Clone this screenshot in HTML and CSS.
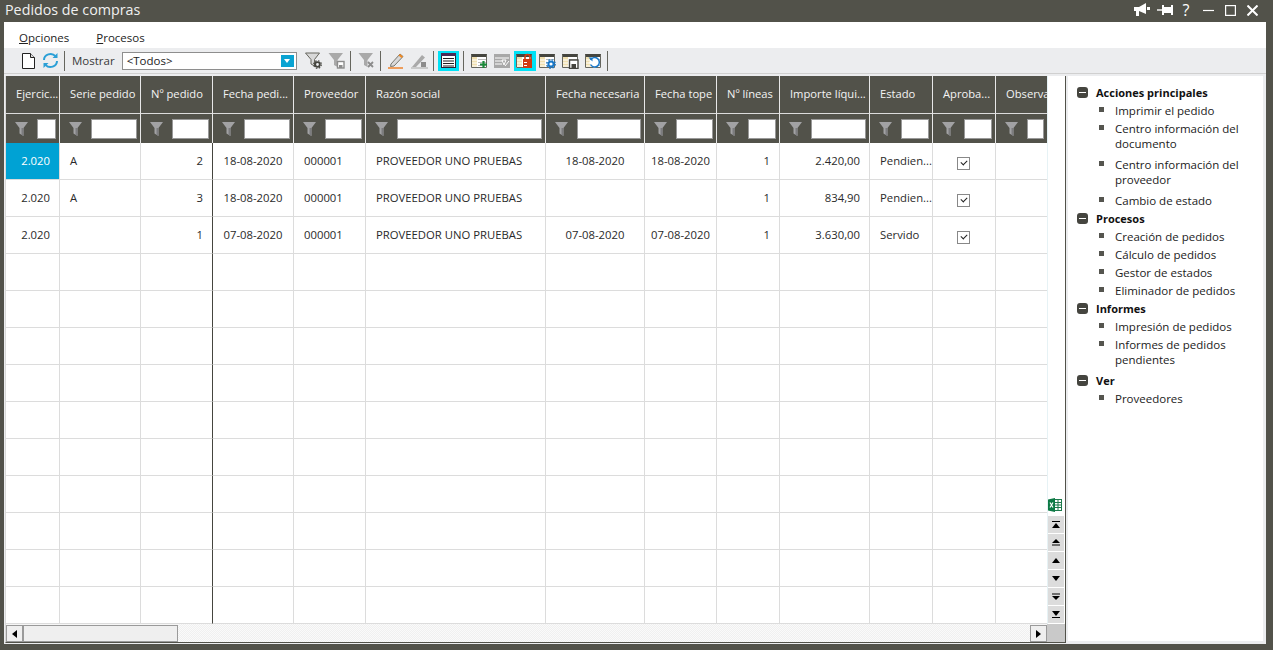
FILE: index.html
```html
<!DOCTYPE html>
<html lang="es">
<head>
    <meta charset="UTF-8">
    <title>Pedidos de compras</title>
    <link rel="stylesheet" href="styles.css">
</head>
<body>
    <svg class="defs" width="0" height="0">
        <symbol id="funnel" viewBox="0 0 13 14"><path d="M0 0H13L8.5 6V14L4.5 11.5V6Z" fill="#a2a2a4"/><path d="M8.5 6V14L6.5 12.7V6Z" fill="#7c7c7f"/></symbol>
        <symbol id="sheet" viewBox="0 0 16 16"><rect x="0" y="1" width="16" height="14" fill="#fff"/><rect x="0" y="1" width="16" height="3" fill="#45453f"/><rect x="1" y="4" width="5" height="10" fill="#f0dfae"/><path d="M1 7H15M1 10H15M1 13H15" stroke="#fff"/><path d="M7 6.500H15M7 9.500H15M7 12.500H15" stroke="#bbb"/><path d="M.5 1.500V14.500H15.500V1.500" fill="none" stroke="#66665e"/></symbol>
    </svg>
    <div class="window">
        <header class="titlebar">
            <span class="title">Pedidos de compras</span>
            <div class="wincontrols">
                <svg width="17" height="14" viewBox="0 0 17 14"><path d="M0 4H5L12 0V11L5 8V13H2V8H0Z" fill="#fff"/><rect x="13" y="4" width="3" height="3" fill="#fff"/></svg>
                <svg class="pin" width="17" height="12" viewBox="0 0 17 12"><path d="M0 6H5" stroke="#fff" stroke-width="1.400"/><path d="M5 1H7V3H14V1H16V11H14V9H7V11H5Z" fill="#fff"/></svg>
                <span class="help">?</span>
                <svg width="11" height="11" viewBox="0 0 11 11"><path d="M0 5.500H11" stroke="#fff" stroke-width="1.200"/></svg>
                <svg width="11" height="11" viewBox="0 0 11 11"><rect x=".6" y=".6" width="9.800" height="9.800" fill="none" stroke="#fff" stroke-width="1.200"/></svg>
                <svg width="11" height="11" viewBox="0 0 11 11"><path d="M.5 .5L10.500 10.500M10.500 .5L.5 10.500" stroke="#fff" stroke-width="2"/></svg>
            </div>
        </header>
        <div class="content">
            <nav class="menu">
                <span class="menu-item"><u>O</u>pciones</span>
                <span class="menu-item"><u>P</u>rocesos</span>
            </nav>
            <div class="toolbar">
                <button class="tool doc"><svg width="13" height="16" viewBox="0 0 13 16"><path d="M.5 .5H8.500L12.500 4.500V15.500H.5Z" fill="#fff" stroke="#222"/><path d="M8.500 .5V4.500H12.500" fill="#ddd" stroke="#222"/></svg></button>
                <button class="tool refresh"><svg width="17" height="17" viewBox="0 0 17 17" fill="none" stroke="#2a9fd6" stroke-width="2"><path d="M2 8A6.500 6 0 0 1 13.500 4.200"/><path d="M15 9A6.500 6 0 0 1 3.500 12.800"/><path d="M15.500 1V6H10.500Z M1.500 16V11H6.500Z" fill="#2a9fd6" stroke="none"/></svg></button>
                <i class="sep"></i>
                <label class="show-label">Mostrar</label>
                <div class="combo"><span>&lt;Todos&gt;</span><b class="combo-btn"></b></div>
                <button class="tool first"><svg width="17" height="17" viewBox="0 0 17 17"><path d="M.5 1H14.500L9.500 7.500V14L6 12V7.500Z" fill="#d8d8d8" stroke="#66665e"/><circle cx="12.500" cy="12.500" r="2.300" fill="none" stroke="#45453f" stroke-width="1.800"/><circle cx="12.500" cy="12.500" r="3.800" fill="none" stroke="#45453f" stroke-width="1.200" stroke-dasharray="1.500 1.500"/></svg></button>
                <button class="tool"><svg width="17" height="17" viewBox="0 0 17 17"><path d="M.5 1H15L9.500 8V15L6 13V8Z" fill="#a9a9a9"/><rect x="9.500" y="9.500" width="6.500" height="6.500" fill="#fff" stroke="#8c8c8c" stroke-width="1.400"/><rect x="11" y="13" width="3.500" height="3" fill="#8c8c8c"/></svg></button>
                <i class="sep"></i>
                <button class="tool"><svg width="17" height="17" viewBox="0 0 17 17"><path d="M.5 1H15L9.500 8V15L6 13V8Z" fill="#a9a9a9"/><path d="M10 10L15 15M15 10L10 15" stroke="#8c8c8c" stroke-width="1.800"/></svg></button>
                <i class="sep"></i>
                <button class="tool"><svg width="17" height="17" viewBox="0 0 17 17"><path d="M3 12L12 2L15 4.500L6 14L2.500 14.500Z" fill="#d9d9d9" stroke="#77776f"/><path d="M12 2L15 4.500L13.500 6L10.500 3.500Z" fill="#f08a24"/><path d="M0 16H15" stroke="#ee7a1e" stroke-width="1.400"/></svg></button>
                <button class="tool"><svg width="17" height="17" viewBox="0 0 17 17"><path d="M1 15L11 3L14 5.500L5 15Z" fill="#a9a9a9"/><path d="M0 16H17" stroke="#bbb" stroke-width="1.400"/><rect x="10" y="10" width="5" height="5" fill="#8c8c8c"/></svg></button>
                <i class="sep"></i>
                <button class="tool active"><svg width="15" height="15" viewBox="0 0 15 15"><rect x=".5" y=".5" width="14" height="14" fill="#fff" stroke="#2b2233"/><rect x="0" y="0" width="15" height="3" fill="#4a2a55"/><path d="M2 5.500H13M2 8H13M2 10.500H13M2 13H13" stroke="#222"/></svg></button>
                <i class="sep after-active"></i>
                <button class="tool"><svg width="17" height="16" viewBox="0 0 17 16"><use href="#sheet" width="16" height="16"/><path d="M12.500 8V15M9 11.500H16" stroke="#1c8a3a" stroke-width="2.200"/></svg></button>
                <button class="tool"><svg width="17" height="16" viewBox="0 0 17 16"><rect y="1" width="16" height="14" fill="#a8a8a8"/><path d="M1 5H15M1 8H8M1 11H8" stroke="#fff"/><path d="M8 7H12L10 12Z M11 13L15 8" stroke="#fff" fill="none"/></svg></button>
                <button class="tool active red"><svg width="17" height="16" viewBox="0 0 17 16"><use href="#sheet" width="16" height="16"/><rect x="7" y="6" width="9" height="9" fill="#cf3b12"/><path d="M9 6.500V4A2.500 2.500 0 0 1 14 4V6.500" fill="none" stroke="#cf3b12" stroke-width="1.600"/><rect x="8" y="9" width="3" height="1" fill="#fff"/><rect x="8" y="12" width="3" height="1" fill="#fff"/></svg></button>
                <button class="tool"><svg width="17" height="16" viewBox="0 0 17 16"><use href="#sheet" width="16" height="16"/><circle cx="12" cy="11" r="2.600" fill="#fff" stroke="#1677c9" stroke-width="2"/><circle cx="12" cy="11" r="4.300" fill="none" stroke="#1677c9" stroke-width="1.200" stroke-dasharray="1.700 1.700"/></svg></button>
                <button class="tool"><svg width="17" height="16" viewBox="0 0 17 16"><use href="#sheet" width="16" height="16"/><rect x="7.500" y="7" width="8.500" height="8.500" fill="#fff" stroke="#45453f" stroke-width="1.400"/><rect x="9.500" y="11" width="4.500" height="4" fill="#45453f"/></svg></button>
                <button class="tool"><svg width="17" height="16" viewBox="0 0 17 16"><use href="#sheet" width="16" height="16"/><circle cx="9.500" cy="9.500" r="5" fill="#fff"/><path d="M5.500 7A4.700 4.700 0 1 1 5.500 11.500" fill="none" stroke="#1677c9" stroke-width="1.500"/><path d="M3.500 4.500H7.500V8.500Z" fill="#1677c9"/></svg></button>
                <i class="sep"></i>
            </div>
            <div class="main">
                <section class="grid">
                    <div class="grid-top">
                        <div class="table-clip">
                            <table class="orders">
                                <colgroup>
                                    <col class="c54"><col class="c81"><col class="c72"><col class="c81"><col class="c72"><col class="c180"><col class="c99"><col class="c72"><col class="c63"><col class="c90"><col class="c63"><col class="c63"><col class="c63">
                                </colgroup>
                                <thead>
                                    <tr class="head">
                                        <th>Ejercic...</th><th>Serie pedido</th><th>Nº pedido</th><th>Fecha pedi...</th><th>Proveedor</th><th>Razón social</th><th>Fecha necesaria</th><th>Fecha tope</th><th>Nº líneas</th><th>Importe líqui...</th><th>Estado</th><th>Aproba...</th><th>Observa</th>
                                    </tr>
                                    <tr class="filters">
                                        <td><svg class="funnel"><use href="#funnel"/></svg><i class="fbox"></i></td>
                                        <td><svg class="funnel"><use href="#funnel"/></svg><i class="fbox"></i></td>
                                        <td><svg class="funnel"><use href="#funnel"/></svg><i class="fbox"></i></td>
                                        <td><svg class="funnel"><use href="#funnel"/></svg><i class="fbox"></i></td>
                                        <td><svg class="funnel"><use href="#funnel"/></svg><i class="fbox"></i></td>
                                        <td><svg class="funnel"><use href="#funnel"/></svg><i class="fbox"></i></td>
                                        <td><svg class="funnel"><use href="#funnel"/></svg><i class="fbox"></i></td>
                                        <td><svg class="funnel"><use href="#funnel"/></svg><i class="fbox"></i></td>
                                        <td><svg class="funnel"><use href="#funnel"/></svg><i class="fbox"></i></td>
                                        <td><svg class="funnel"><use href="#funnel"/></svg><i class="fbox"></i></td>
                                        <td><svg class="funnel"><use href="#funnel"/></svg><i class="fbox"></i></td>
                                        <td><svg class="funnel"><use href="#funnel"/></svg><i class="fbox"></i></td>
                                        <td><svg class="funnel"><use href="#funnel"/></svg><i class="fbox short"></i></td>
                                    </tr>
                                </thead>
                                <tbody>
                                    <tr><td class="num selected">2.020</td><td>A</td><td class="num">2</td><td class="mid">18-08-2020</td><td>000001</td><td>PROVEEDOR UNO PRUEBAS</td><td class="mid">18-08-2020</td><td class="mid">18-08-2020</td><td class="num">1</td><td class="num">2.420,00</td><td class="nowrap">Pendien...</td><td class="mid"><i class="check"></i></td><td></td></tr>
                                    <tr><td class="num">2.020</td><td>A</td><td class="num">3</td><td class="mid">18-08-2020</td><td>000001</td><td>PROVEEDOR UNO PRUEBAS</td><td></td><td></td><td class="num">1</td><td class="num">834,90</td><td class="nowrap">Pendien...</td><td class="mid"><i class="check"></i></td><td></td></tr>
                                    <tr><td class="num">2.020</td><td></td><td class="num">1</td><td class="mid">07-08-2020</td><td>000001</td><td>PROVEEDOR UNO PRUEBAS</td><td class="mid">07-08-2020</td><td class="mid">07-08-2020</td><td class="num">1</td><td class="num">3.630,00</td><td>Servido</td><td class="mid"><i class="check"></i></td><td></td></tr>
                                    <tr><td></td><td></td><td></td><td></td><td></td><td></td><td></td><td></td><td></td><td></td><td></td><td></td><td></td></tr>
                                    <tr><td></td><td></td><td></td><td></td><td></td><td></td><td></td><td></td><td></td><td></td><td></td><td></td><td></td></tr>
                                    <tr><td></td><td></td><td></td><td></td><td></td><td></td><td></td><td></td><td></td><td></td><td></td><td></td><td></td></tr>
                                    <tr><td></td><td></td><td></td><td></td><td></td><td></td><td></td><td></td><td></td><td></td><td></td><td></td><td></td></tr>
                                    <tr><td></td><td></td><td></td><td></td><td></td><td></td><td></td><td></td><td></td><td></td><td></td><td></td><td></td></tr>
                                    <tr><td></td><td></td><td></td><td></td><td></td><td></td><td></td><td></td><td></td><td></td><td></td><td></td><td></td></tr>
                                    <tr><td></td><td></td><td></td><td></td><td></td><td></td><td></td><td></td><td></td><td></td><td></td><td></td><td></td></tr>
                                    <tr><td></td><td></td><td></td><td></td><td></td><td></td><td></td><td></td><td></td><td></td><td></td><td></td><td></td></tr>
                                    <tr><td></td><td></td><td></td><td></td><td></td><td></td><td></td><td></td><td></td><td></td><td></td><td></td><td></td></tr>
                                    <tr><td></td><td></td><td></td><td></td><td></td><td></td><td></td><td></td><td></td><td></td><td></td><td></td><td></td></tr>
                                </tbody>
                            </table>
                        </div>
                        <div class="side-strip">
                            <svg class="excel" width="14" height="14" viewBox="0 0 14 14"><rect x="6.500" y="1.500" width="7" height="11" fill="#fff" stroke="#1d7a4c"/><path d="M7 4.500H13M7 7H13M7 9.500H13M10 2V12" stroke="#1d7a4c"/><path d="M0 1.500L7 0V14L0 12.500Z" fill="#0d7a45"/><path d="M2 4.500L5 9.500M5 4.500L2 9.500" stroke="#fff" stroke-width="1.200"/></svg>
                            <button class="nav"><svg width="8" height="7" viewBox="0 0 8 7"><path d="M0 .5H8" stroke="#000"/><path d="M4 2L8 7H0Z"/></svg></button>
                            <button class="nav"><svg width="8" height="7" viewBox="0 0 8 7"><path d="M4 0L8 4H0Z"/><path d="M0 6H8" stroke="#000"/></svg></button>
                            <button class="nav"><svg width="8" height="5" viewBox="0 0 8 5"><path d="M4 0L8 5H0Z"/></svg></button>
                            <button class="nav"><svg width="8" height="5" viewBox="0 0 8 5"><path d="M0 0H8L4 5Z"/></svg></button>
                            <button class="nav"><svg width="8" height="7" viewBox="0 0 8 7"><path d="M0 1H8" stroke="#000"/><path d="M0 3H8L4 7Z"/></svg></button>
                            <button class="nav"><svg width="8" height="7" viewBox="0 0 8 7"><path d="M0 6.500H8" stroke="#000"/><path d="M0 0H8L4 5Z"/></svg></button>
                        </div>
                    </div>
                    <div class="hscroll">
                        <button class="sbtn"><svg width="5" height="8" viewBox="0 0 5 8"><path d="M5 0V8L0 4Z"/></svg></button>
                        <div class="thumb"></div>
                        <div class="track"></div>
                        <button class="sbtn"><svg width="5" height="8" viewBox="0 0 5 8"><path d="M0 0V8L5 4Z"/></svg></button>
                        <div class="corner"></div>
                    </div>
                </section>
                <aside class="tasks">
                    <h3 class="group">Acciones principales</h3>
                    <ul>
                        <li class="r18">Imprimir el pedido</li>
                        <li class="r36">Centro información del documento</li>
                        <li class="r36">Centro información del proveedor</li>
                        <li class="r18">Cambio de estado</li>
                    </ul>
                    <h3 class="group">Procesos</h3>
                    <ul>
                        <li class="r18">Creación de pedidos</li>
                        <li class="r18">Cálculo de pedidos</li>
                        <li class="r18">Gestor de estados</li>
                        <li class="r18">Eliminador de pedidos</li>
                    </ul>
                    <h3 class="group">Informes</h3>
                    <ul>
                        <li class="r18">Impresión de pedidos</li>
                        <li class="r36">Informes de pedidos pendientes</li>
                    </ul>
                    <h3 class="group">Ver</h3>
                    <ul>
                        <li class="r18">Proveedores</li>
                    </ul>
                </aside>
            </div>
        </div>
    </div>
</body>
</html>
```

FILE: styles.css
```css
* {
    box-sizing: border-box;
}

html, body {
    margin: 0;
    height: 100%;
    overflow: hidden;
}

body {
    font-family: "Open Sans", "Noto Sans", sans-serif;
    font-size: 11.5px;
    color: #222;
    background-color: #52524a;
}

.defs {
    position: absolute;
}

.window {
    display: flex;
    flex-direction: column;
    height: 650px;
    padding: 0 7px 6px 4px;
}

.titlebar {
    height: 22px;
    flex: none;
    display: flex;
    justify-content: space-between;
    align-items: center;
    color: #f0f0f0;
}

.title {
    font-size: 14.3px;
    margin: -3px 0 0 1px;
}

.wincontrols {
    display: flex;
    align-items: center;
    gap: 11px;
    margin: -2px 8px 0 0;
}

.wincontrols .pin {
    margin-left: -5px;
}

.help {
    color: #fff;
    font-size: 16px;
    width: 12px;
    margin-left: -5px;
    text-align: center;
    line-height: 14px;
}

.content {
    flex: 1;
    display: flex;
    flex-direction: column;
    background-color: #ecedef;
    min-height: 0;
}

.menu {
    height: 26px;
    flex: none;
    background-color: #fff;
    display: flex;
    align-items: center;
    padding: 5px 0 0 15px;
    gap: 27px;
}

.toolbar {
    height: 26px;
    flex: none;
    display: flex;
    align-items: center;
    padding-left: 16px;
    border-bottom: 1px solid #d0d0d0;
}

.tool {
    border: 0;
    padding: 0;
    background: none;
    width: 16px;
    height: 17px;
    flex: none;
    margin-right: 7px;
    display: flex;
    align-items: center;
    justify-content: center;
}

.tool svg {
    flex: none;
}

.tool.doc {
    margin-right: 5px;
    width: 17px;
}

.tool.refresh {
    margin-right: 7px;
    width: 17px;
}

.tool.first {
    margin-left: 9px;
}

.tool.active {
    width: 21px;
    height: 20px;
    margin: 0 4px 0 -4px;
    background-color: #00e1f5;
}

.tool.red {
    width: 22px;
}

.sep {
    display: block;
    width: 1px;
    height: 20px;
    flex: none;
    background-color: #66665e;
    margin: 0 8px 0 -2px;
}

.sep.after-active {
    margin-left: 0;
}

.show-label {
    margin: 0 7px 0 -1px;
    color: #3a3a3a;
}

.combo {
    width: 175px;
    height: 18px;
    flex: none;
    background-color: #fff;
    border: 1px solid #8e8e8e;
    display: flex;
    align-items: center;
    justify-content: space-between;
    padding: 0 2px 0 4px;
    color: #222;
}

.combo-btn {
    width: 13px;
    height: 12px;
    background-color: #0aa3d2;
    position: relative;
}

.combo-btn::after {
    content: "";
    position: absolute;
    left: 3px;
    top: 4px;
    border-left: 3.500px solid transparent;
    border-right: 3.500px solid transparent;
    border-top: 4px solid #fff;
}

.main {
    flex: 1;
    display: flex;
    min-height: 0;
    padding: 2px 3px 1px 1px;
    gap: 2px;
}

.grid {
    width: 1061px;
    flex: none;
    display: flex;
    flex-direction: column;
    background-color: #fff;
    border-right: 1px solid #52524a;
    border-bottom: 1px solid #52524a;
    border-left: 1px solid #d9d9d9;
}

.grid-top {
    display: flex;
    flex: 1;
    min-height: 0;
}

.table-clip {
    width: 1041px;
    overflow: hidden;
}

.orders {
    table-layout: fixed;
    border-collapse: separate;
    border-spacing: 0;
    width: 1013px;
}

.c54 { width: 54px; }
.c63 { width: 63px; }
.c72 { width: 72px; }
.c81 { width: 81px; }
.c90 { width: 90px; }
.c99 { width: 99px; }
.c180 { width: 180px; }

.head th {
    height: 38px;
    background-color: #52524a;
    color: #f4f4f4;
    font-size: 11.2px;
    font-weight: 400;
    padding: 0 0 3px 10px;
    text-align: left;
    white-space: nowrap;
    overflow: hidden;
    border-right: 1px solid #e8e8e8;
    border-bottom: 1px solid #dcdcdc;
}

.filters td {
    height: 29px;
    background-color: #52524a;
    border-right: 1px solid #e8e8e8;
    padding: 0 3px 0 9px;
    white-space: nowrap;
}

.filters td > * {
    vertical-align: middle;
}

.funnel {
    width: 13px;
    height: 14px;
    margin-right: 9px;
}

.fbox {
    display: inline-block;
    width: calc(100% - 22px);
    height: 20px;
    background-color: #fff;
    border: 1px solid #999;
}

.fbox.short {
    width: 17px;
}

tbody td {
    height: 37px;
    padding: 0 10px 1px;
    font-size: 11.3px;
    white-space: nowrap;
    overflow: hidden;
    border-right: 1px solid #dcdcdc;
    border-bottom: 1px solid #dcdcdc;
    color: #2a2a2a;
}

tbody td:nth-child(3) {
    border-right-color: #45453f;
}

tbody td.num {
    text-align: right;
    padding-right: 9px;
}

tbody td.mid {
    text-align: center;
    padding-left: 0;
    padding-right: 0;
}

tbody td.nowrap {
    padding-right: 0;
}

tbody td.selected {
    background-color: #00a2d4;
    color: #fff;
}

.check {
    display: inline-block;
    width: 13px;
    height: 13px;
    margin: 5px 1px 0 0;
    border: 1px solid #888;
    background-color: #fff;
    position: relative;
    vertical-align: middle;
}

.check::after {
    content: "";
    position: absolute;
    left: 3px;
    top: 2px;
    width: 5px;
    height: 3px;
    border-left: 1.300px solid #222;
    border-bottom: 1.300px solid #222;
    transform: rotate(-45deg);
}

.side-strip {
    width: 18px;
    flex: none;
    display: flex;
    flex-direction: column;
    justify-content: flex-end;
    align-items: flex-start;
    background-color: #fff;
    border-left: 1px solid #e6f2f5;
}

.excel {
    margin-bottom: 4px;
}

.nav {
    width: 16px;
    height: 17px;
    border: 0;
    margin: 0 0 1px;
    padding: 0;
    background-color: #dcdcdc;
    display: flex;
    align-items: center;
    justify-content: center;
}

.hscroll {
    height: 18px;
    flex: none;
    display: flex;
    align-items: stretch;
    background-color: #f6f6f6;
}

.sbtn {
    width: 17px;
    border: 1px solid #9a9a9a;
    padding: 0;
    margin: 1px 0 0;
    background-color: #efefef;
    display: flex;
    align-items: center;
    justify-content: center;
}

.thumb {
    width: 155px;
    margin: 1px 0 0;
    background-color: #efefef;
    border: 1px solid #9a9a9a;
}

.track {
    flex: 1;
    background-image: repeating-conic-gradient(#f0f0f0 0 25%, #fafafa 0 50%);
    background-size: 2px 2px;
}

.corner {
    width: 18px;
    background-color: #c9c9c9;
}

.tasks {
    flex: 1;
    background-color: #fff;
    margin-bottom: 2px;
    padding: 8px 4px 0 8px;
    color: #222;
}

.group {
    margin: 0;
    font-size: 11px;
    font-weight: 700;
    color: #111;
    line-height: 18px;
    padding-left: 20px;
    position: relative;
}

.group::before {
    content: "";
    position: absolute;
    left: 1px;
    top: 3px;
    width: 11px;
    height: 11px;
    border-radius: 3px;
    background-color: #45453f;
}

.group::after {
    content: "";
    position: absolute;
    left: 3px;
    top: 8px;
    width: 7px;
    height: 1px;
    background-color: #fff;
}

.tasks ul {
    list-style: none;
    margin: 0;
    padding: 0 0 0 39px;
}

.tasks li {
    position: relative;
    line-height: 15px;
}

.tasks li::before {
    content: "";
    position: absolute;
    left: -16px;
    top: 5px;
    width: 5px;
    height: 5px;
    background-color: #55554f;
}

.tasks li.r18 {
    padding: 1px 0 2px;
}

.tasks li.r36 {
    padding: 1px 0 5px;
}
```
